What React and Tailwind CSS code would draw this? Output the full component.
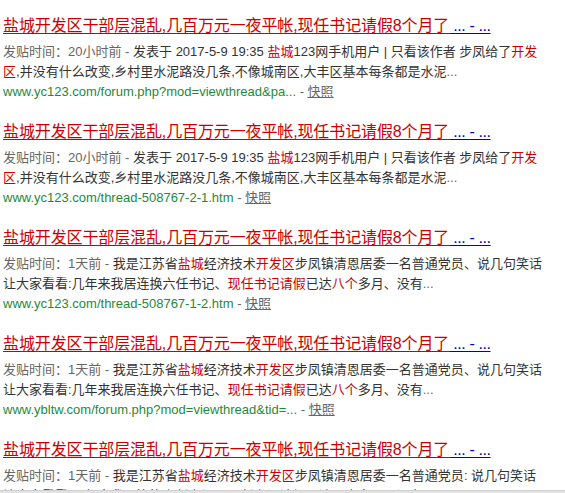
import React from "react";

const R = ({ children }) => <span className="text-[#cc0000]">{children}</span>;
const G = ({ children }) => <span className="text-[#666666]">{children}</span>;

const line1A = (
  <>
    <G>发贴时间：20小时前 - </G>
    发表于 2017-5-9 19:35 <R>盐城</R>123网手机用户 | 只看该作者 步凤给了<R>开发</R>
  </>
);
const line2A = (
  <>
    <R>区</R>,并没有什么改变,乡村里水泥路没几条,不像城南区,大丰区基本每条都是水泥<G>...</G>
  </>
);
const line1B = (sep) => (
  <>
    <G>发贴时间：1天前 - </G>
    我是江苏省<R>盐城</R>经济技术<R>开发区</R>步凤镇清恩居委一名普通党员{sep}说几句笑话
  </>
);
const line2B = (
  <>
    让大家看看:几年来我居连换六任书记、<R>现任书记请假</R>已达<R>八个</R>多月、没有<G>...</G>
  </>
);

const results = [
  { l1: line1A, l2: line2A, url: "www.yc123.com/forum.php?mod=viewthread&pa..." },
  { l1: line1A, l2: line2A, url: "www.yc123.com/thread-508767-2-1.htm" },
  { l1: line1B("、"), l2: line2B, url: "www.yc123.com/thread-508767-1-2.htm" },
  { l1: line1B("、"), l2: line2B, url: "www.ybltw.com/forum.php?mod=viewthread&tid=..." },
  { l1: line1B(": "), l2: line2B, url: "www.yc123.com/thread-508767-1-1.htm" },
];

function Result({ r }) {
  return (
    <div className="mb-[18px]">
      <div className="h-[24px] leading-[24px] text-[16px] whitespace-nowrap">
        <span className="text-[#cc0000] underline decoration-[#cc0000] underline-offset-[2px] tracking-[-0.12px]">
          盐城开发区干部层混乱,几百万元一夜平帐,现任书记请假8个月了
        </span>
        <span className="text-[#0000cc] underline decoration-[#0000cc] underline-offset-[2px] tracking-[-0.4px]"> ... - ...</span>
      </div>
      <div className="mt-[4px] text-[13px] leading-[20px] text-[#333333]">
        <div className="whitespace-nowrap">{r.l1}</div>
        <div className="whitespace-nowrap">{r.l2}</div>
        <div className="whitespace-nowrap">
          <span className="text-[#1e8a3a]">{r.url}</span>
          <G> - </G>
          <span className="text-[#666666] underline">快照</span>
        </div>
      </div>
    </div>
  );
}

export default function App() {
  return (
    <div className="w-[565px] h-[493px] bg-white flex flex-col font-['Liberation_Sans','Noto_Sans_CJK_SC',sans-serif]">
      <div className="h-[490px] overflow-hidden pt-[14px] pl-[3px]">
        {results.map((r, i) => (
          <Result key={i} r={r} />
        ))}
      </div>
      <div className="h-[3px] bg-[#e3e3e3] border-t border-[#d0d0d0]" />
    </div>
  );
}
